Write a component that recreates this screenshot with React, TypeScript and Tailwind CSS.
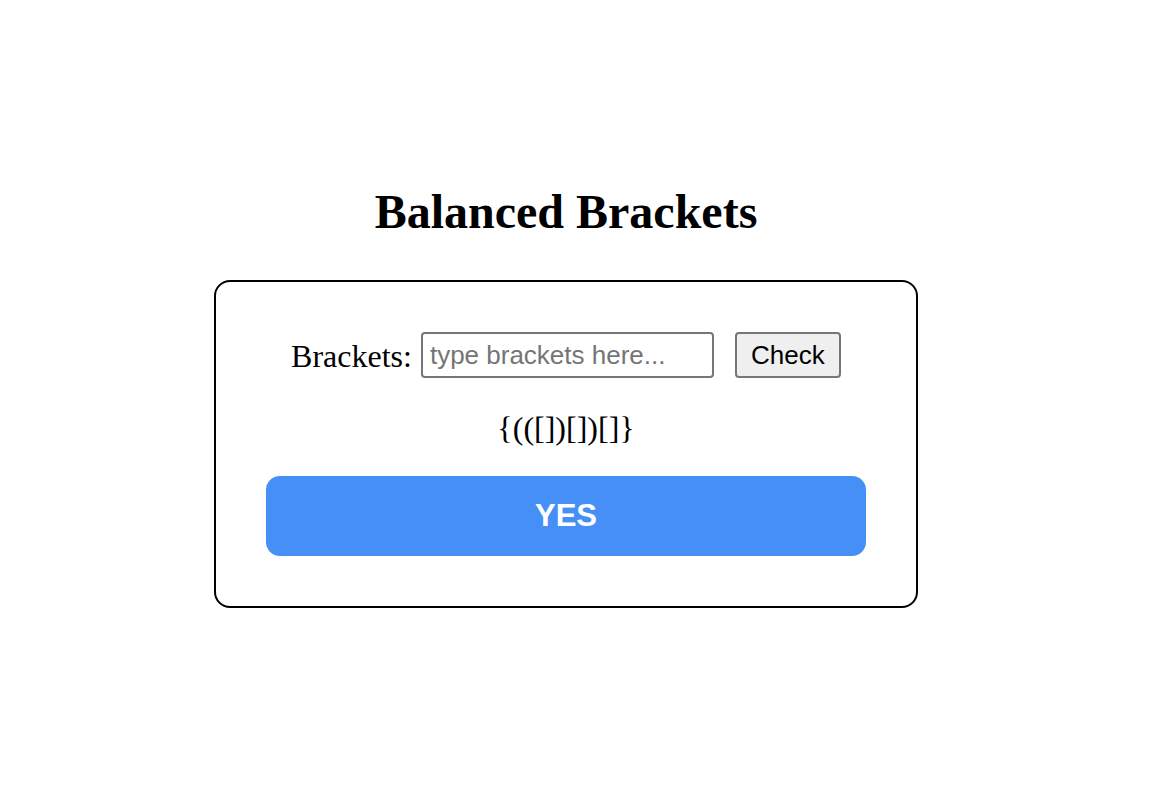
import { useState } from 'react'

function isBalanced(s: string) {
  const pairs: Record<string, string> = { ')': '(', ']': '[', '}': '{' }
  const stack: string[] = []
  for (const ch of s) {
    if ('([{'.includes(ch)) stack.push(ch)
    else if (pairs[ch]) {
      if (stack.pop() !== pairs[ch]) return false
    }
  }
  return stack.length === 0
}

export default function App() {
  const [value, setValue] = useState('')
  const [checked, setChecked] = useState('{(([])[])[]}')

  const ok = isBalanced(checked)

  return (
    <div className="min-h-screen bg-white">
      <div className="w-[1132px] flex flex-col items-center pt-[185px] font-['Liberation_Serif',serif] text-black">
        <h1 className="text-[48px] leading-[53px] font-bold mb-[42px]">Balanced Brackets</h1>

        <div className="w-[704px] border-2 border-black rounded-[16px] px-[50px] pt-[50px] pb-[50px] flex flex-col items-center">
          <div className="flex items-center">
            <label htmlFor="brackets" className="text-[32px] leading-[37px] mr-[9px] mt-[2px]">
              Brackets:
            </label>
            <input
              id="brackets"
              type="text"
              value={value}
              onChange={(e) => setValue(e.target.value)}
              placeholder="type brackets here..."
              className="w-[293px] h-[46px] border-2 border-[#767676] rounded-[4px] px-[7px] text-[26px] font-['Liberation_Sans',Arial,sans-serif] placeholder-[#757575] outline-none"
            />
            <button
              onClick={() => setChecked(value)}
              className="ml-[21px] w-[106px] h-[46px] bg-[#efefef] border-2 border-[#767676] rounded-[4px] text-[26px] font-['Liberation_Sans',Arial,sans-serif] text-black"
            >
              Check
            </button>
          </div>

          <div className="mt-[32px] mb-[30px] text-[32px] leading-[36px]">{checked}</div>

          <div
            className={
              'w-[600px] h-[80px] rounded-[14px] flex items-center justify-center text-white font-bold text-[31px] font-[\'Liberation_Sans\',Arial,sans-serif] ' +
              (ok ? 'bg-[#468ff6]' : 'bg-[#e5484d]')
            }
          >
            {ok ? 'YES' : 'NO'}
          </div>
        </div>
      </div>
    </div>
  )
}
